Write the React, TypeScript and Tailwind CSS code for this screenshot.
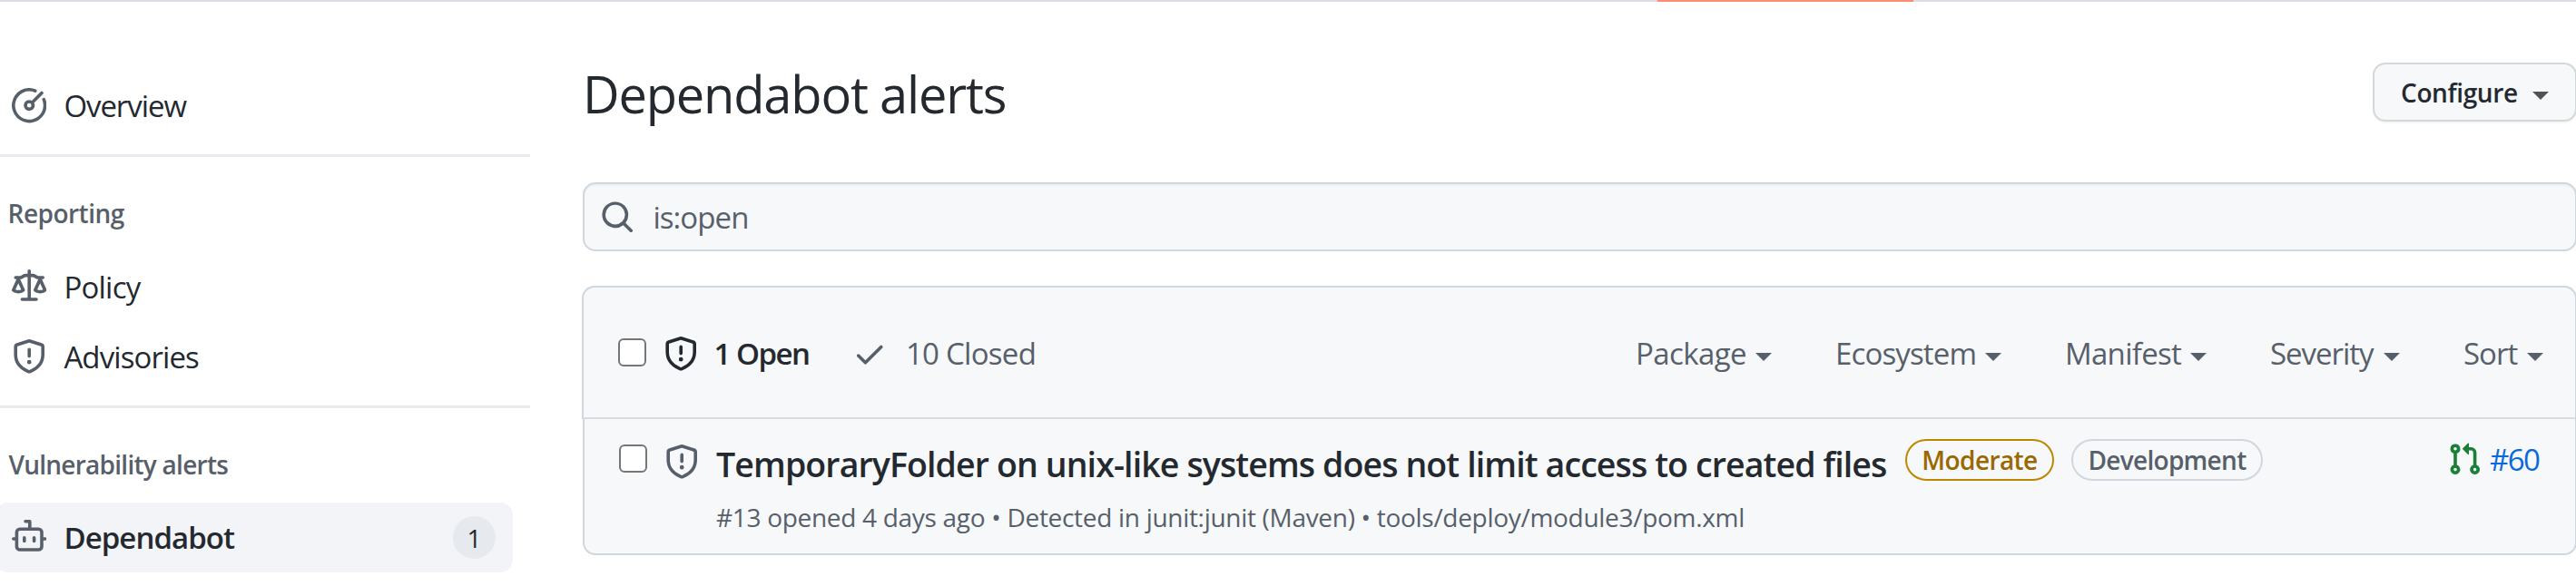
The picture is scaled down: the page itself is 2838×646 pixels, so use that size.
import React from "react";

const icons = {
  meter:
    "M8 1.5a6.5 6.5 0 1 0 6.016 4.035.75.75 0 0 1 1.388-.57 8 8 0 1 1-4.37-4.37.75.75 0 0 1-.569 1.389A6.473 6.473 0 0 0 8 1.5Zm6.28.22a.75.75 0 0 1 0 1.06l-4.063 4.064a2.5 2.5 0 1 1-1.06-1.06L13.22 1.72a.75.75 0 0 1 1.06 0ZM7 8a1 1 0 1 0 2 0 1 1 0 0 0-2 0Z",
  law: "M8.75.75V2h.985c.304 0 .603.08.867.231l1.29.736c.038.022.08.033.124.033h2.234a.75.75 0 0 1 0 1.5h-.427l2.111 4.692a.75.75 0 0 1-.154.838l-.53-.53.529.531-.001.002-.002.002-.006.006-.006.005-.01.01-.045.04c-.21.176-.441.327-.686.45C14.556 10.78 13.88 11 13 11a4.498 4.498 0 0 1-2.023-.454 3.544 3.544 0 0 1-.686-.45l-.045-.04-.016-.015-.006-.006-.004-.004v-.001a.75.75 0 0 1-.154-.838L12.178 4.5h-.162c-.305 0-.604-.079-.868-.231l-1.29-.736a.245.245 0 0 0-.124-.033H8.75V13h2.5a.75.75 0 0 1 0 1.5h-6.5a.75.75 0 0 1 0-1.5h2.5V3.5h-.984a.245.245 0 0 0-.124.033l-1.289.737c-.265.15-.564.23-.869.23h-.162l2.112 4.692a.75.75 0 0 1-.154.838l-.53-.53.529.531-.001.002-.002.002-.006.006-.016.015-.045.04c-.21.176-.441.327-.686.45C4.556 10.78 3.88 11 3 11a4.498 4.498 0 0 1-2.023-.454 3.544 3.544 0 0 1-.686-.45l-.045-.04-.016-.015-.006-.006-.004-.004v-.001a.75.75 0 0 1-.154-.838L2.178 4.5H1.75a.75.75 0 0 1 0-1.5h2.234a.249.249 0 0 0 .125-.033l1.288-.737c.265-.15.564-.23.869-.23h.984V.75a.75.75 0 0 1 1.5 0Zm2.945 8.477c.285.135.718.273 1.305.273s1.02-.138 1.305-.273L13 6.327Zm-10 0c.285.135.718.273 1.305.273s1.02-.138 1.305-.273L3 6.327Z",
  shield:
    "M7.467.133a1.748 1.748 0 0 1 1.066 0l5.25 1.68A1.75 1.75 0 0 1 15 3.48V7c0 1.566-.32 3.182-1.303 4.682-.983 1.498-2.585 2.813-5.032 3.855a1.697 1.697 0 0 1-1.33 0c-2.447-1.042-4.049-2.357-5.032-3.855C1.32 10.182 1 8.566 1 7V3.48a1.75 1.75 0 0 1 1.217-1.667Zm.61 1.429a.25.25 0 0 0-.153 0l-5.25 1.68a.25.25 0 0 0-.174.238V7c0 1.358.275 2.666 1.057 3.86.784 1.194 2.121 2.34 4.366 3.297a.196.196 0 0 0 .154 0c2.245-.956 3.582-2.104 4.366-3.298C13.225 9.666 13.5 8.36 13.5 7V3.48a.251.251 0 0 0-.174-.237l-5.25-1.68ZM8.75 4.75v3a.75.75 0 0 1-1.5 0v-3a.75.75 0 0 1 1.5 0ZM9 10.5a1 1 0 1 1-2 0 1 1 0 0 1 2 0Z",
  dependabot:
    "M5.75 7.5a.75.75 0 0 1 .75.75v1.5a.75.75 0 0 1-1.5 0v-1.5a.75.75 0 0 1 .75-.75Zm5.25.75a.75.75 0 0 0-1.5 0v1.5a.75.75 0 0 0 1.5 0v-1.5ZM6.25 0h2A.75.75 0 0 1 9 .75V3.5h3.25a2.25 2.25 0 0 1 2.25 2.25V8h.75a.75.75 0 0 1 0 1.5h-.75v2.75a2.25 2.25 0 0 1-2.25 2.25h-8.5a2.25 2.25 0 0 1-2.25-2.25V9.5H.75a.75.75 0 0 1 0-1.5h.75V5.75A2.25 2.25 0 0 1 3.75 3.5H7.5v-2H6.25a.75.75 0 0 1 0-1.5ZM3 5.75v6.5c0 .414.336.75.75.75h8.5a.75.75 0 0 0 .75-.75v-6.5a.75.75 0 0 0-.75-.75h-8.5a.75.75 0 0 0-.75.75Z",
  search:
    "M10.68 11.74a6 6 0 0 1-7.922-8.982 6 6 0 0 1 8.982 7.922l3.04 3.04a.749.749 0 0 1-.326 1.275.749.749 0 0 1-.734-.215ZM11.5 7a4.499 4.499 0 1 0-8.997 0A4.499 4.499 0 0 0 11.5 7Z",
  check:
    "M13.78 4.22a.75.75 0 0 1 0 1.06l-7.25 7.25a.75.75 0 0 1-1.06 0L2.22 9.28a.751.751 0 0 1 .018-1.042.751.751 0 0 1 1.042-.018L6 10.94l6.72-6.72a.75.75 0 0 1 1.06 0Z",
  pull: "M1.5 3.25a2.25 2.25 0 1 1 3 2.122v5.256a2.251 2.251 0 1 1-1.5 0V5.372A2.25 2.25 0 0 1 1.5 3.25Zm5.677-.177L9.573.677A.25.25 0 0 1 10 .854V2.5h1A2.5 2.5 0 0 1 13.5 5v5.628a2.251 2.251 0 1 1-1.5 0V5a1 1 0 0 0-1-1h-1v1.646a.25.25 0 0 1-.427.177L7.177 3.427a.25.25 0 0 1 0-.354ZM3.75 2.5a.75.75 0 1 0 0 1.5.75.75 0 0 0 0-1.5Zm0 9.5a.75.75 0 1 0 0 1.5.75.75 0 0 0 0-1.5Zm8.25.75a.75.75 0 1 0 1.5 0 .75.75 0 0 0-1.5 0Z",
};

function Icon({ name, className = "" }: { name: keyof typeof icons; className?: string }) {
  return (
    <svg viewBox="0 0 16 16" fill="currentColor" className={`size-[38.4px] shrink-0 ${className}`}>
      <path d={icons[name]} />
    </svg>
  );
}

function Caret({ className = "" }: { className?: string }) {
  return (
    <svg viewBox="0 0 18 9" fill="currentColor" className={`h-[9px] w-[18px] shrink-0 ${className}`}>
      <path d="M0 0H18L9 9Z" />
    </svg>
  );
}

function Checkbox({ className = "" }: { className?: string }) {
  return <span className={`size-[31px] shrink-0 rounded-[6px] border-2 border-[#767676] bg-white ${className}`} />;
}

function NavItem({ icon, label, tracking }: { icon: keyof typeof icons; label: string; tracking: string }) {
  return (
    <a className="flex h-[77px] items-center pl-[13px] text-[33px] text-[#24292f]">
      <Icon name={icon} className="text-[#57606a]" />
      <span className={`ml-[19px] ${tracking}`}>{label}</span>
    </a>
  );
}

const filters = [
  { label: "Package", box: "w-[132px] tracking-[-0.6px]" },
  { label: "Ecosystem", box: "w-[165px] tracking-[-0.86px]" },
  { label: "Manifest", box: "w-[138px] tracking-[-0.71px]" },
  { label: "Severity", box: "w-[125px] tracking-[-1.03px]" },
  { label: "Sort", box: "w-[70px] tracking-[-1.01px]" },
];

export default function App() {
  return (
    <div className="flex h-[646px] w-[2838px] flex-col overflow-hidden bg-white font-['Open_Sans','Noto_Sans',sans-serif] leading-none whitespace-nowrap text-[#24292f]">
      <div className="h-[2px] shrink-0 bg-[#d8dee4] pl-[1826px]">
        <div className="h-[2px] w-[282px] bg-[#fd8c73]" />
      </div>

      <div className="flex">
        <nav className="w-[584px] shrink-0 pt-[76px]">
          <NavItem icon="meter" label="Overview" tracking="tracking-[-1.07px]" />
          <div className="mt-[15px] h-[3px] bg-[#e7eaef]" />
          <h3 className="mt-[48px] pl-[8.5px] text-[28px] leading-[28px] font-semibold tracking-[-0.5px] text-[#57606a]">
            Reporting
          </h3>
          <div className="mt-[29px]">
            <NavItem icon="law" label="Policy" tracking="tracking-[-0.77px]" />
            <NavItem icon="shield" label="Advisories" tracking="tracking-[-0.9px]" />
          </div>
          <div className="mt-[15px] h-[3px] bg-[#e7eaef]" />
          <h3 className="mt-[48px] pl-[9.5px] text-[28px] leading-[28px] font-semibold tracking-[-0.74px] text-[#57606a]">
            Vulnerability alerts
          </h3>
          <a className="mt-[28px] -ml-[5px] flex h-[77px] w-[570px] items-center rounded-[14px] bg-[#f3f4f7] pr-[19px] pl-[18px] text-[33px]">
            <Icon name="dependabot" className="text-[#57606a]" />
            <span className="ml-[19px] font-semibold tracking-[-0.94px]">Dependabot</span>
            <span className="ml-auto flex size-[47px] items-center justify-center rounded-full bg-[#e6e9ee] text-[28px] font-medium">
              1
            </span>
          </a>
        </nav>

        <main className="ml-[57px] w-[2198px] shrink-0">
          <div className="flex items-start justify-between pt-[67px]">
            <h1 className="mt-[6px] ml-[1px] text-[56px] leading-[56px] tracking-[-1.17px]">Dependabot alerts</h1>
            <button className="flex h-[65px] w-[225px] items-center rounded-[14px] border-2 border-[#d5d8da] bg-[#f6f8fa] pl-[29px] text-[28px] font-semibold shadow-[0_2px_0_rgba(27,31,36,0.04)]">
              <span className="w-[145px] text-left tracking-[-0.37px]">Configure</span>
              <Caret className="mt-[8px] text-[#505459]" />
            </button>
          </div>

          <div className="mt-[67px] ml-[1px] flex h-[76px] items-center rounded-[14px] border-2 border-[#d0d7de] bg-[#f6f8fa] pl-[17px] text-[33px] text-[#57606a] shadow-[inset_0_2px_0_rgba(208,215,222,0.2)]">
            <Icon name="search" />
            <span className="ml-[20px] tracking-[-0.92px]">is:open</span>
          </div>

          <section className="mt-[38px]">
            <header className="flex h-[147px] items-center rounded-t-[14px] border-2 border-[#d0d7de] border-b-[#d6dce2] bg-[#f6f8fa] pl-[38px] text-[33px] text-[#57606a]">
              <Checkbox />
              <Icon name="shield" className="mt-[4px] ml-[18.6px] text-[#24292f]" />
              <span className="mt-[1px] ml-[17.5px] w-[153px] font-semibold tracking-[-1.47px] text-[#24292f]">1 Open</span>
              <Icon name="check" className="mt-[4px]" />
              <span className="mt-[1px] ml-[20px] tracking-[-0.72px]">10 Closed</span>
              <div className="mt-[2px] mr-[35px] ml-auto flex gap-[70px]">
                {filters.map((f) => (
                  <button key={f.label} className="flex items-center">
                    <span className={`text-left ${f.box}`}>{f.label}</span>
                    <Caret className="mt-[7px]" />
                  </button>
                ))}
              </div>
            </header>

            <article className="ml-[1px] flex h-[150px] items-start rounded-b-[14px] border-2 border-t-0 border-[#d0d7de] bg-[#f6f8fa] pl-[38px]">
              <Checkbox className="mt-[28px]" />
              <Icon name="shield" className="mt-[28px] ml-[18.6px] text-[#57606a]" />
              <div className="ml-[19px]">
                <div className="flex items-start pt-[22px] font-semibold">
                  <h2 className="w-[1310px] pt-[9px] text-[37.5px] leading-[37px] tracking-[-0.89px]">
                    TemporaryFolder on unix-like systems does not limit access to created files
                  </h2>
                  <span className="flex h-[46px] w-[164px] items-center justify-center rounded-full border-2 border-[#bf8700] text-[28px] tracking-[-0.58px] text-[#9a6700]">
                    Moderate
                  </span>
                  <span className="ml-[19px] flex h-[46px] w-[211px] items-center justify-center rounded-full border-2 border-[#d0d7de] text-[28px] tracking-[-0.7px] text-[#57606a]">
                    Development
                  </span>
                </div>
                <p className="mt-[26px] text-[28px] leading-[28px] tracking-[-0.3px] text-[#57606a]">
                  #13 opened 4 days ago • Detected in junit:junit (Maven) • tools/deploy/module3/pom.xml
                </p>
              </div>
              <a className="mt-[25px] mr-[38px] ml-auto flex items-center text-[33px] text-[#0969da]">
                <Icon name="pull" className="text-[#1a7f37]" />
                <span className="ml-[9px] w-[56px] tracking-[-1.6px]">#60</span>
              </a>
            </article>
          </section>
        </main>
      </div>
    </div>
  );
}
